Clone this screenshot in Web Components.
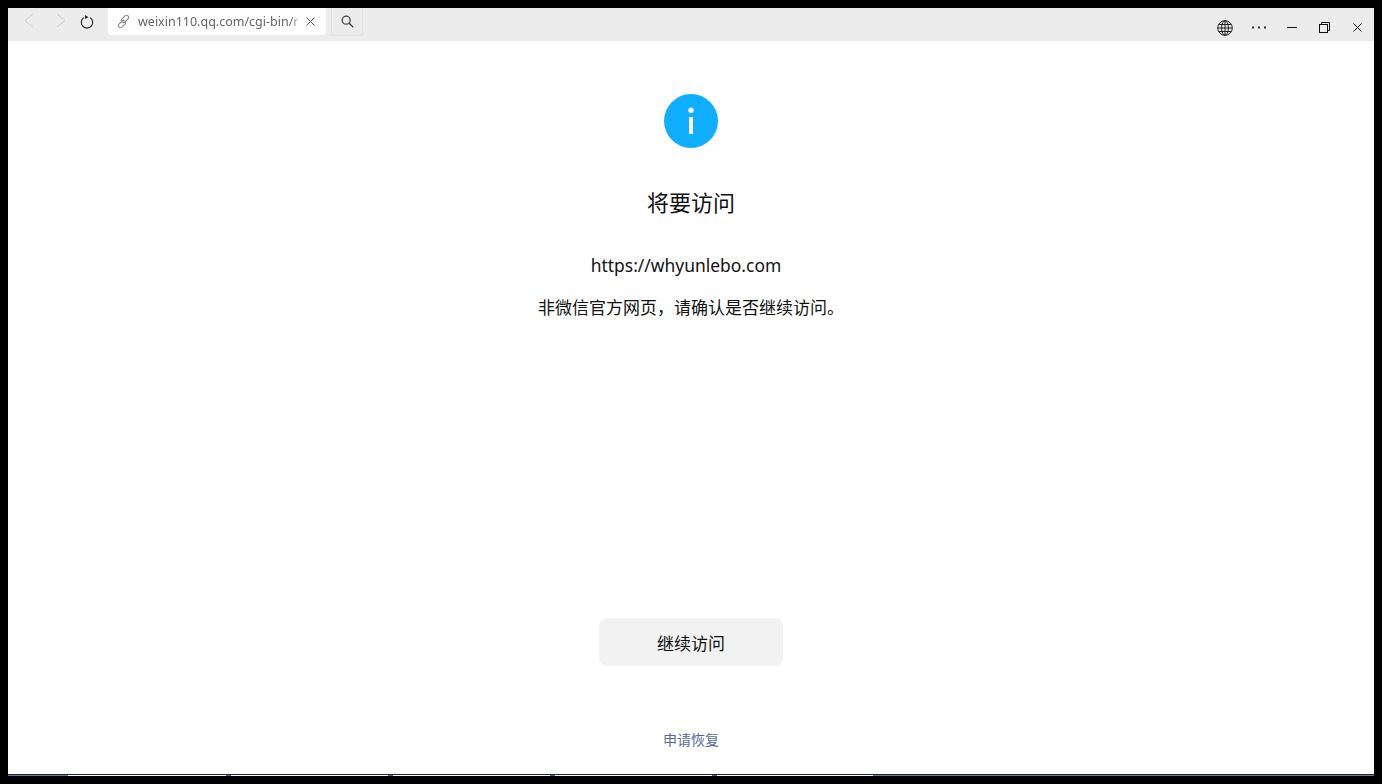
<!DOCTYPE html>
<html lang="zh-CN">
<head>
<meta charset="utf-8">
<title>将要访问</title>
<style>
  html, body { margin: 0; height: 100%; background: #000; }
  body { font-family: "Noto Sans", "Noto Sans CJK SC", sans-serif; }
</style>
</head>
<body>
<browser-window>
  <browser-toolbar></browser-toolbar>
  <warning-page>
    <span slot="title">将要访问</span>
    <span slot="url">https://whyunlebo.com</span>
    <span slot="desc">非微信官方网页，请确认是否继续访问。</span>
    <span slot="action">继续访问</span>
    <span slot="link">申请恢复</span>
  </warning-page>
</browser-window>

<script>
class BrowserWindow extends HTMLElement {
    constructor() {
        super();
        this.attachShadow({ mode: 'open' });
    }

    connectedCallback() {
        this.shadowRoot.innerHTML = `
            <style>
                :host {
                    display: flex;
                    flex-direction: column;
                    box-sizing: border-box;
                    height: 784px;
                    padding: 8px 8px 0;
                }
                .content {
                    flex: none;
                    height: 766px;
                    display: flex;
                    flex-direction: column;
                    background: #fff;
                }
                .edge {
                    flex: none;
                    height: 1px;
                    background: #1c2530;
                }
                .tabs {
                    flex: none;
                    height: 1px;
                    display: flex;
                    background: #fff;
                }
                .tabs i { flex: none; }
                .tabs .on { background: #6a7f97; }
                .tabs .tick { width: 5px; background: #55606c; }
                .tabs .gap { width: 157px; }
                .tabs .end { flex: 1; }
            </style>
            <div class="content"><slot></slot></div>
            <div class="edge"></div>
            <div class="tabs">
                <i class="on" style="width:60px"></i>
                <i class="gap" style="width:158px"></i><i class="tick"></i>
                <i class="gap"></i><i class="tick"></i>
                <i class="gap"></i><i class="tick"></i>
                <i class="gap"></i><i class="tick"></i>
                <i class="gap" style="width:156px"></i>
                <i class="on end"></i>
            </div>
        `;
    }
}

class BrowserToolbar extends HTMLElement {
    constructor() {
        super();
        this.attachShadow({ mode: 'open' });
    }

    connectedCallback() {
        this.shadowRoot.innerHTML = `
            <style>
                :host {
                    display: flex;
                    flex: none;
                    height: 33px;
                    background: #ececec;
                    align-items: flex-start;
                }
                .nav {
                    display: flex;
                    align-items: center;
                    height: 26px;
                    padding-left: 13px;
                    gap: 14px;
                    width: 100px;
                    box-sizing: border-box;
                }
                .nav svg { flex: none; }
                .nav .reload { margin: 2px 0 0 -1px; }
                .tab {
                    display: flex;
                    align-items: center;
                    box-sizing: border-box;
                    width: 218px;
                    height: 27px;
                    background: #fff;
                    border-radius: 0 0 3px 3px;
                    padding: 0 11px 0 9px;
                    font: 12.5px "Noto Sans", sans-serif;
                    color: #666;
                }
                .addr {
                    flex: 1;
                    min-width: 0;
                    margin-left: 8px;
                    white-space: nowrap;
                    -webkit-mask-image: linear-gradient(to right, #000 93%, transparent 100%);
                    mask-image: linear-gradient(to right, #000 93%, transparent 100%);
                }
                .tab .x { margin-left: 4px; flex: none; }
                .search {
                    display: flex;
                    align-items: center;
                    justify-content: center;
                    box-sizing: border-box;
                    width: 32px;
                    height: 28px;
                    margin-left: 5px;
                    border: 1px solid #e2e2e2;
                    border-top: none;
                    border-radius: 0 0 3px 3px;
                }
                .right {
                    display: flex;
                    align-items: center;
                    margin-left: auto;
                    height: 33px;
                    padding-top: 5px;
                    box-sizing: border-box;
                }
                .right span { display: flex; justify-content: center; align-items: center; width: 33px; }
                .right .globe { margin-left: -1px; margin-right: 1px; padding-top: 1px; }
            </style>
            <div class="nav">
                <svg width="16" height="16" viewBox="0 0 16 16" fill="none" stroke="#d0d0d0" stroke-width="1"><path d="M12 1 4 7.500l8 6.500"/></svg>
                <svg width="16" height="16" viewBox="0 0 16 16" fill="none" stroke="#d0d0d0" stroke-width="1"><path d="m6 1 8 6.500-8 6.500"/></svg>
                <svg class="reload" width="14" height="14" viewBox="0 0 14 14" fill="none" stroke="#222" stroke-width="1.100"><path d="M3.900 2.600a5.700 5.700 0 1 0 6.200 0"/><path d="M5 0 8.500 2.200 5 4z" fill="#222" stroke="none"/></svg>
            </div>
            <div class="tab">
                <svg width="13" height="13" viewBox="0 0 13 13" fill="none" stroke="#8a8a8a" stroke-width="1.100"><rect x="5.900" y="-.3" width="4.200" height="8.400" rx="2.100" transform="rotate(45 8 3.900)"/><rect x="2.900" y="4.900" width="4.200" height="8.400" rx="2.100" transform="rotate(45 5 9.100)"/></svg>
                <span class="addr">weixin110.qq.com/cgi-bin/r</span>
                <svg class="x" width="9" height="9" viewBox="0 0 9 9" stroke="#555" stroke-width="1"><path d="m.5.500 8 8M8.500.500l-8 8"/></svg>
            </div>
            <div class="search">
                <svg width="13" height="13" viewBox="0 0 13 13" fill="none" stroke="#444" stroke-width="1.300"><circle cx="5.200" cy="5.200" r="4"/><path d="m8.200 8.200 4 4"/></svg>
            </div>
            <div class="right">
                <span class="globe"><svg width="16" height="16" viewBox="0 0 16 16" fill="none" stroke="#222" stroke-width="1"><circle cx="8" cy="8" r="7.300"/><ellipse cx="8" cy="8" rx="3.400" ry="7.300"/><path d="M8 .7v14.600M.7 8h14.600M1.800 4.500h12.400M1.800 11.500h12.400"/></svg></span>
                <span><svg width="14" height="3" viewBox="0 0 14 3" fill="#333"><rect width="2" height="2" y=".5" x="0"/><rect width="2" height="2" y=".5" x="6"/><rect width="2" height="2" y=".5" x="12"/></svg></span>
                <span><svg width="10" height="1" viewBox="0 0 10 1"><rect width="10" height="1" fill="#111"/></svg></span>
                <span><svg width="11" height="11" viewBox="0 0 11 11" fill="none" stroke="#111"><rect x=".5" y="2.500" width="8" height="8"/><path d="M2.500 2.500v-2h8v8h-2"/></svg></span>
                <span><svg width="9" height="9" viewBox="0 0 9 9" stroke="#111"><path d="m.5.500 8 8M8.500.500l-8 8"/></svg></span>
            </div>
        `;
    }
}

class WarningPage extends HTMLElement {
    constructor() {
        super();
        this.attachShadow({ mode: 'open' });
    }

    connectedCallback() {
        this.shadowRoot.innerHTML = `
            <style>
                :host {
                    display: flex;
                    flex: 1;
                    flex-direction: column;
                    align-items: center;
                    font-family: "Noto Sans", "Noto Sans CJK SC", sans-serif;
                    color: #111;
                }
                .icon { margin-top: 53px; display: block; }
                .title { margin-top: 38px; font-size: 22px; line-height: 32px; }
                .url { margin-top: 34px; padding-right: 10px; font-size: 17.45px; line-height: 26px; }
                .desc { margin-top: 17px; font-size: 17px; line-height: 26px; }
                .action {
                    margin-top: 297px;
                    box-sizing: border-box;
                    width: 184px;
                    height: 48px;
                    display: flex;
                    align-items: center;
                    justify-content: center;
                    background: #f2f2f2;
                    border-radius: 8px;
                    font-size: 17px;
                }
                .link { margin-top: 64px; font-size: 14px; line-height: 20px; color: #576b95; }
            </style>
            <svg class="icon" width="54" height="54" viewBox="0 0 54 54">
                <circle cx="27" cy="27" r="27" fill="#10aeff"/>
                <circle cx="27" cy="16.300" r="2.700" fill="#fff"/>
                <rect x="25" y="23" width="4" height="17" fill="#fff"/>
            </svg>
            <div class="title"><slot name="title"></slot></div>
            <div class="url"><slot name="url"></slot></div>
            <div class="desc"><slot name="desc"></slot></div>
            <div class="action"><slot name="action"></slot></div>
            <div class="link"><slot name="link"></slot></div>
        `;
    }
}

customElements.define('browser-window', BrowserWindow);
customElements.define('browser-toolbar', BrowserToolbar);
customElements.define('warning-page', WarningPage);
</script>
</body>
</html>
